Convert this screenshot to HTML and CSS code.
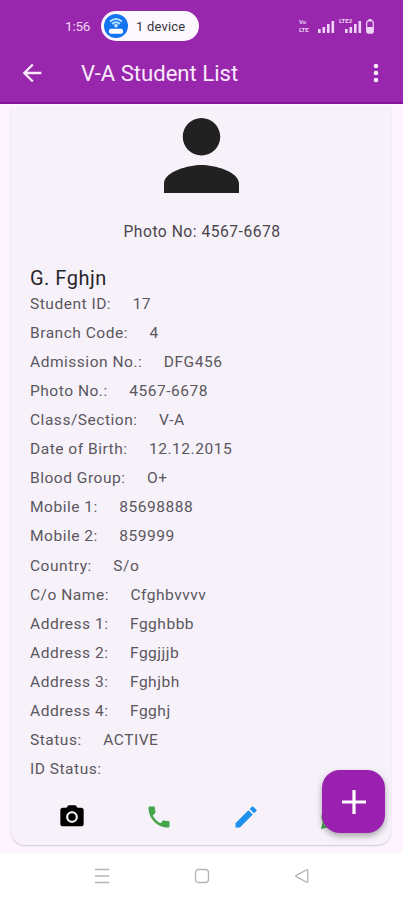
FILE: index.html
```html
<!DOCTYPE html>
<html lang="en">
<head>
<meta charset="utf-8">
<title>V-A Student List</title>
<link rel="stylesheet" href="styles.css">
</head>
<body>
<header class="header">
  <div class="status-bar">
    <span class="clock">1:56</span>
    <div class="device-pill">
      <svg class="device-icon" viewBox="0 0 24 24"><circle cx="12" cy="12" r="12" fill="#1473ee"/><path d="M6 7.6Q12 2.6 18 7.6M8 10Q12 6.6 16 10" fill="none" stroke="#b9e2ff" stroke-width="1.9"/><circle cx="12" cy="11.6" r="1.9" fill="#b9e2ff"/><rect x="5" y="14.7" width="14" height="5" rx="1.8" fill="#fff"/></svg>
      <span>1 device</span>
    </div>
    <div class="signals">
      <span class="tiny"><span>Vo</span><span>LTE</span></span>
      <svg class="bars" viewBox="0 0 17 13"><path d="M0 9h2.6v4H0zM4.5 7h2.6v6H4.5zM9 4h2.6v9H9zM13.5 1h2.6v12h-2.6z"/></svg>
      <span class="lte">LTE2</span>
      <svg class="bars" viewBox="0 0 17 13"><path d="M0 9h2.6v4H0zM4.5 7h2.6v6H4.5zM9 4h2.6v9H9zM13.5 1h2.6v12h-2.6z"/></svg>
      <svg class="battery" viewBox="0 0 8 15"><path d="M2.5 0h3v2h-3z"/><rect x=".7" y="1.9" width="6.6" height="12.3" rx="1.8" fill="none" stroke="#efd5f5" stroke-width="1.2"/><path d="M1 8h6v6H1z"/></svg>
    </div>
  </div>
  <div class="app-bar">
    <svg class="back" viewBox="0 0 24 24"><path d="M20 11H7.83l5.59-5.59L12 4l-8 8 8 8 1.41-1.41L7.83 13H20v-2z"/></svg>
    <h1>V-A Student List</h1>
    <svg class="more" viewBox="0 0 24 24"><path d="M12 8a2 2 0 1 0 0-4 2 2 0 0 0 0 4zm0 2a2 2 0 1 0 0 4 2 2 0 0 0 0-4zm0 6a2 2 0 1 0 0 4 2 2 0 0 0 0-4z"/></svg>
  </div>
</header>
<main class="content">
  <article class="card">
    <svg class="avatar" viewBox="4 4 16 16"><path d="M12 12c2.21 0 4-1.79 4-4s-1.79-4-4-4-4 1.79-4 4 1.79 4 4 4zm0 2c-2.67 0-8 1.34-8 4v2h16v-2c0-2.66-5.33-4-8-4z"/></svg>
    <p class="photo">Photo No: 4567-6678</p>
    <h2>G. Fghjn</h2>
    <dl class="details">
      <div><dt>Student ID:</dt><dd>17</dd></div>
      <div><dt>Branch Code:</dt><dd>4</dd></div>
      <div><dt>Admission No.:</dt><dd>DFG456</dd></div>
      <div><dt>Photo No.:</dt><dd>4567-6678</dd></div>
      <div><dt>Class/Section:</dt><dd>V-A</dd></div>
      <div><dt>Date of Birth:</dt><dd>12.12.2015</dd></div>
      <div><dt>Blood Group:</dt><dd>O+</dd></div>
      <div><dt>Mobile 1:</dt><dd>85698888</dd></div>
      <div><dt>Mobile 2:</dt><dd>859999</dd></div>
      <div><dt>Country:</dt><dd>S/o</dd></div>
      <div><dt>C/o Name:</dt><dd>Cfghbvvvv</dd></div>
      <div><dt>Address 1:</dt><dd>Fgghbbb</dd></div>
      <div><dt>Address 2:</dt><dd>Fggjjjb</dd></div>
      <div><dt>Address 3:</dt><dd>Fghjbh</dd></div>
      <div><dt>Address 4:</dt><dd>Fgghj</dd></div>
      <div><dt>Status:</dt><dd>ACTIVE</dd></div>
      <div><dt>ID Status:</dt><dd></dd></div>
    </dl>
    <div class="actions">
      <svg viewBox="0 0 24 24" fill="#000"><circle cx="12" cy="12" r="3.2"/><path d="M9 2 7.17 4H4c-1.1 0-2 .9-2 2v12c0 1.1.9 2 2 2h16c1.1 0 2-.9 2-2V6c0-1.1-.9-2-2-2h-3.17L15 2H9zm3 15c-2.76 0-5-2.24-5-5s2.24-5 5-5 5 2.24 5 5-2.24 5-5 5z"/></svg>
      <svg viewBox="0 0 24 24" fill="#43a64a"><path d="M6.62 10.79c1.44 2.83 3.76 5.14 6.59 6.59l2.2-2.2c.27-.27.67-.36 1.02-.24 1.12.37 2.33.57 3.57.57.55 0 1 .45 1 1V20c0 .55-.45 1-1 1-9.39 0-17-7.61-17-17 0-.55.45-1 1-1h3.5c.55 0 1 .45 1 1 0 1.25.2 2.45.57 3.57.11.35.03.74-.25 1.02l-2.2 2.2z"/></svg>
      <svg viewBox="0 0 24 24" fill="#1e90ee"><path d="M3 17.25V21h3.75L17.81 9.94l-3.75-3.75L3 17.25zM20.71 7.04a1 1 0 0 0 0-1.41l-2.34-2.34a1 1 0 0 0-1.41 0l-1.83 1.83 3.75 3.75 1.83-1.83z"/></svg>
      <svg viewBox="0 0 24 24" fill="none" stroke="#43a64a" stroke-width="2"><path d="M3 21l1.3-4.8A9 9 0 1 1 7.9 19.7z"/><path d="M7.5 8q0 7 8 9"/></svg>
    </div>
  </article>
  <button class="fab" aria-label="Add"><svg viewBox="0 0 24 24"><path d="M0 12h24M12 0v24"/></svg></button>
</main>
<nav class="nav">
  <svg viewBox="0 0 16 16"><path d="M1 1.5h14M1 8h14M1 14.5h14"/></svg>
  <svg viewBox="0 0 16 16"><rect x="1.5" y="1.5" width="13" height="13" rx="3"/></svg>
  <svg viewBox="0 0 16 16"><path d="M13.7 2.2v11.6q0 1-.9.5L2.2 8.6q-1-.6 0-1.2L12.8 1.7q.9-.5.9.5z"/></svg>
</nav>
</body>
</html>
```
FILE: styles.css
```css
* { box-sizing: border-box; }
body { margin: 0; width: 403px; height: 900px; overflow: hidden; display: flex; flex-direction: column; background: #fff; font-family: Roboto, sans-serif; }
svg { display: block; flex: none; }
h1, h2, p, dl, dd { margin: 0; font-weight: 400; }

.header { height: 104px; flex: none; background: #9827ad; border-bottom: 2px solid #86109c; color: #f8eafa; }
.status-bar { height: 43px; padding: 11px 29px 0 65px; display: flex; align-items: flex-start; }
.clock { width: 36px; font-size: 13.5px; line-height: 31px; letter-spacing: -.2px; color: #efd5f5; }
.device-pill { width: 98px; height: 30px; padding: 0 3px; display: flex; align-items: center; gap: 8px; border-radius: 15px; background: #fcf8fd; color: #38333b; font-size: 13px; letter-spacing: .2px; white-space: nowrap; }
.device-icon { width: 24px; height: 24px; }
.signals { margin-left: auto; height: 30px; display: flex; align-items: center; color: #efd5f5; fill: #efd5f5; font-weight: 700; }
.tiny { display: flex; flex-direction: column; font-size: 6px; line-height: 8px; width: 19px; }
.bars { width: 17px; height: 13px; }
.lte { font-size: 6px; width: 14px; margin-left: 4px; margin-right: -8px; align-self: flex-start; padding-top: 7px; line-height: 6px; white-space: nowrap; }
.battery { width: 8px; height: 15px; margin-left: 4px; }

.app-bar { height: 60px; display: flex; align-items: center; padding: 0 13px 0 18px; }
.back { width: 28px; height: 28px; fill: #f8eafa; }
.app-bar h1 { margin-left: 35px; flex: 1; font-size: 22.1px; line-height: 30px; }
.more { width: 28px; height: 28px; fill: #f8eafa; }

.content { height: 749px; flex: none; padding: 2px 12px 8px 11px; position: relative; background: #fdf4fe; }
.card { height: 739px; padding: 12px 0 0 19px; border-radius: 0 0 14px 14px; background: #f7f2fa; box-shadow: 0 1px 1.5px rgba(60, 40, 70, .22); display: flex; flex-direction: column; }
.avatar { width: 75px; height: 75px; margin-left: 134px; fill: #212121; }
.photo { margin: 28px 0 0 93.5px; font-size: 15.65px; line-height: 22px; letter-spacing: .5px; color: #49454c; }
.card h2 { margin-top: 21px; font-size: 20px; line-height: 28px; letter-spacing: .5px; color: #28242b; }
.details { font-size: 15.55px; letter-spacing: .5px; color: #5b575e; line-height: 29.12px; margin-top: -2.4px; }
.details div { display: flex; height: 29.12px; gap: 21.5px; }
.actions { display: grid; grid-template-columns: repeat(4, 87px); margin: 18.4px 0 0 -2px; justify-items: center; width: 348px; }
.actions svg { width: 28px; height: 28px; }
.fab { position: absolute; right: 18px; bottom: 20px; width: 63px; height: 63px; padding: 0; border: 0; border-radius: 18px; background: #9a20b0; box-shadow: 0 3px 6px rgba(0, 0, 0, .32); display: grid; place-items: center; }
.fab svg { width: 24px; height: 24px; stroke: #fff; stroke-width: 3.2; }

.nav { flex: 1; display: flex; gap: 84px; padding: 15px 0 0 94px; }
.nav svg { width: 16px; height: 16px; fill: none; stroke: #b5b3b6; stroke-width: 1.3; }
```
